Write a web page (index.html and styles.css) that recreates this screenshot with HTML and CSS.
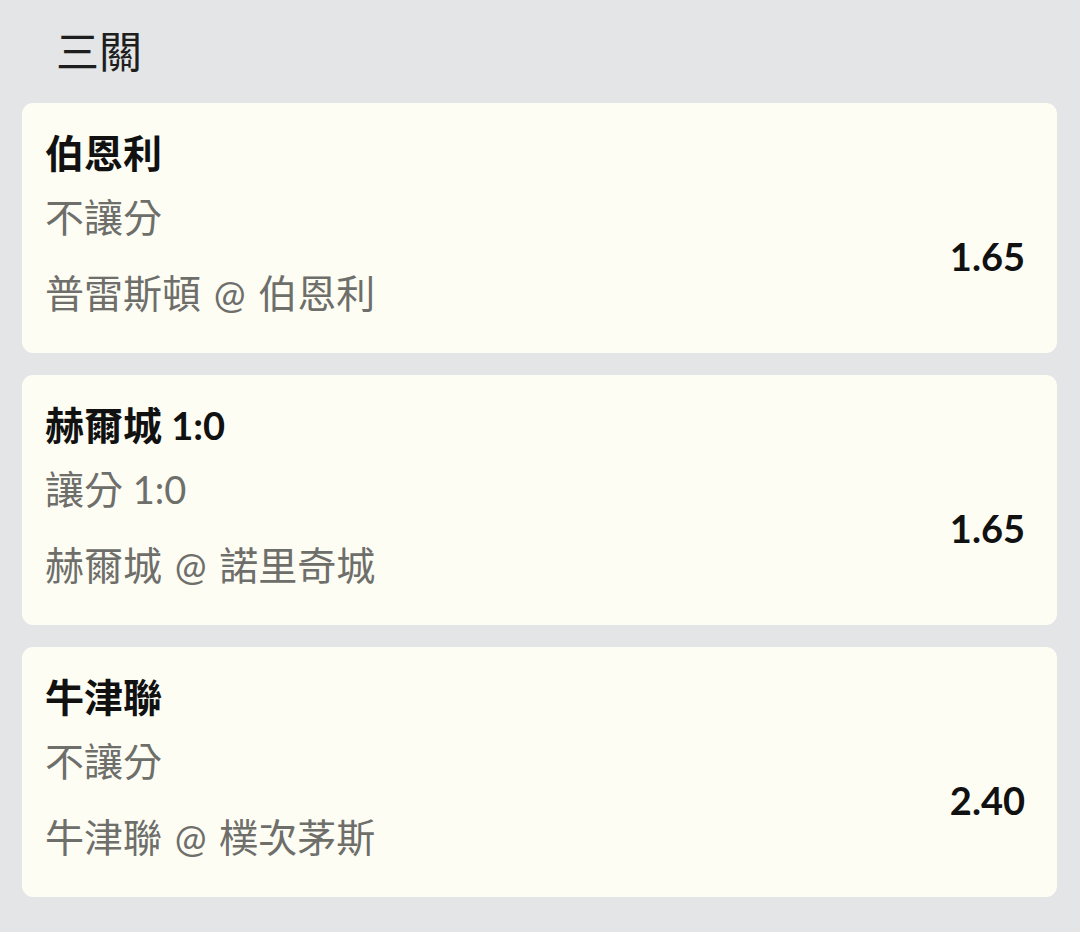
FILE: index.html
```html
<!DOCTYPE html>
<html lang="zh-Hant">
<head>
<meta charset="utf-8">
<link rel="stylesheet" href="styles.css">
</head>
<body>
<div class="page">
  <h1 class="title">三關</h1>
  <div class="list">
    <div class="card">
      <div class="team">伯恩利</div>
      <div class="row">
        <div class="info">
          <div class="market">不讓分</div>
          <div class="match">普雷斯頓<span class="lat at"> @ </span>伯恩利</div>
        </div>
        <div class="odds">1.65</div>
      </div>
    </div>
    <div class="card">
      <div class="team">赫爾城<span class="lat"> 1:0</span></div>
      <div class="row">
        <div class="info">
          <div class="market">讓分<span class="lat"> 1:0</span></div>
          <div class="match">赫爾城<span class="lat at"> @ </span>諾里奇城</div>
        </div>
        <div class="odds">1.65</div>
      </div>
    </div>
    <div class="card">
      <div class="team">牛津聯</div>
      <div class="row">
        <div class="info">
          <div class="market">不讓分</div>
          <div class="match">牛津聯<span class="lat at"> @ </span>樸次茅斯</div>
        </div>
        <div class="odds">2.40</div>
      </div>
    </div>
  </div>
</div>
</body>
</html>
```

FILE: styles.css
```css
html, body {
  margin: 0;
  padding: 0;
  background: #e4e5e7;
}
body {
  width: 1080px;
  height: 932px;
  overflow: hidden;
  font-family: "Lato", "Noto Sans CJK TC", sans-serif;
}
.page {
  padding: 20px 23px 0 22px;
}
.title {
  margin: 0 0 25px 34px;
  font-size: 43px;
  line-height: 58px;
  font-weight: 400;
  color: #1e1e1e;
  font-family: "Noto Sans CJK TC", sans-serif;
}
.list {
  display: flex;
  flex-direction: column;
  gap: 22px;
}
.card {
  background: #fdfdf4;
  border-radius: 11px;
  padding: 28px 32px 38px 23px;
  font-size: 39px;
}
.lat {
  font-family: "Lato", sans-serif;
  font-size: 38px;
  line-height: 1;
}
.at {
  word-spacing: 3px;
}
.team {
  line-height: 44px;
  font-weight: 700;
  color: #111;
}
.row {
  display: flex;
  align-items: center;
  justify-content: space-between;
  margin-top: 20px;
}
.market, .match {
  line-height: 44px;
  color: #6e6e6a;
}
.match {
  margin-top: 32px;
}
.odds {
  font-family: "Lato", sans-serif;
  font-size: 38px;
  font-weight: 700;
  color: #111;
  padding-top: 2px;
}
```
